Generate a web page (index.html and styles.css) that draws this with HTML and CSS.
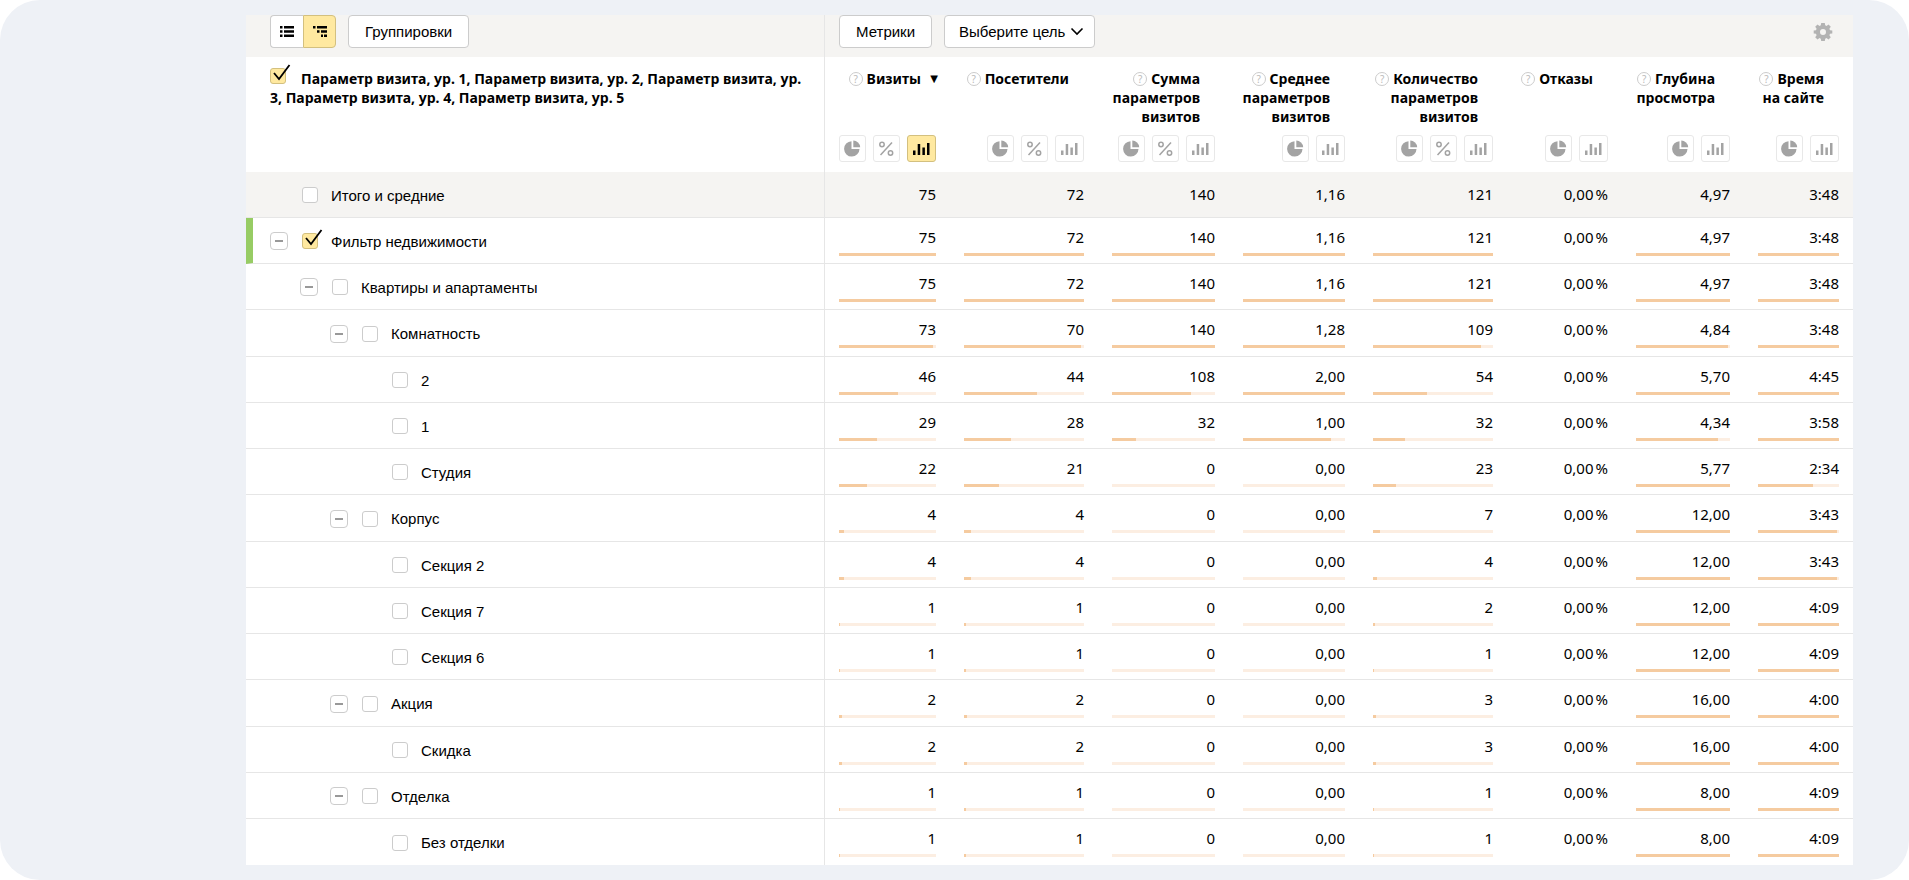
FILE: index.html
```
<!DOCTYPE html>
<html lang="ru">
<head>
  <meta charset="UTF-8">
  <meta name="viewport" content="width=device-width, initial-scale=1.0">
  <title>Параметры визитов</title>
  <link rel="stylesheet" href="styles.css">
</head>
<body>
  <!-- Icons -->
  <svg class="sprite" aria-hidden="true">
    <symbol id="pie" viewBox="0 0 17 17">
      <path d="M7.5 1.2V9h8A7.7 7.7 0 1 1 7.5 1.2z"/>
      <path d="M9.3.6a7.2 7.2 0 0 1 6.9 6.6H9.3z"/>
    </symbol>
    <symbol id="percent" viewBox="0 0 17 17">
      <g fill="none" stroke="currentColor" stroke-width="1.5">
        <circle cx="4" cy="4.5" r="2.2"/>
        <circle cx="12.5" cy="13" r="2.2"/>
        <path d="M14 2.5 2.5 15"/>
      </g>
    </symbol>
    <symbol id="bars" viewBox="0 0 17 17">
      <path d="M0 10.500h2.500V15H0zM4.700 4h2.500v11H4.700zM9.400 7.500h2.500V15H9.400zM14 3h2.500v12H14z"/>
    </symbol>
  </svg>

  <main class="page">
    <div class="report">
      <div class="toolbar">
        <div class="toolbar-left">
          <div class="switch">
            <button class="btn btn-icon" aria-label="Список">
              <svg width="14" height="11" viewBox="0 0 14 11"><path d="M0 0h2.5v2.5H0zM4 0h10v2.5H4zM0 4.2h2.5v2.5H0zM4 4.2h10v2.5H4zM0 8.4h2.5v2.5H0zM4 8.4h10v2.5H4z"/></svg>
            </button>
            <button class="btn btn-icon active" aria-label="Дерево">
              <svg width="14" height="11" viewBox="0 0 14 11"><path d="M0 0h2.5v2.5H0zM4 0h10v2.5H4zM4 4.2h2.5v2.5H4zM8 4.2h6v2.5H8zM8 8.4h2v2.5H8zM11 8.4h3v2.5h-3z"/></svg>
            </button>
          </div>
          <button class="btn">Группировки</button>
        </div>
        <div class="toolbar-right">
          <button class="btn">Метрики</button>
          <select class="btn goal" aria-label="Цель">
            <option>Выберите цель</option>
          </select>
          <button class="gear" aria-label="Настройки">
            <svg width="20" height="20" viewBox="0 0 20 20"><path fill-rule="evenodd" d="M8.2 1h3.6l.4 2.3 1.3.6 2-1.4 2.3 2.3-1.4 2 .6 1.4 2.3.4v2.8l-2.3.4-.6 1.4 1.4 2-2.3 2.3-2-1.4-1.3.6-.4 2.3H8.2l-.4-2.3-1.3-.6-2 1.4-2.3-2.3 1.4-2-.6-1.4-2.3-.4V8.600l2.300-.4.6-1.400-1.400-2 2.300-2.300 2 1.400 1.300-.6zM10 7a3 3 0 1 0 0 6 3 3 0 0 0 0-6z"/></svg>
          </button>
        </div>
      </div>

      <table>
        <colgroup>
          <col>
          <col class="col-visits">
          <col class="col-users">
          <col class="col-sum">
          <col class="col-avg">
          <col class="col-count">
          <col class="col-bounce">
          <col class="col-depth">
          <col class="col-time">
        </colgroup>
        <thead>
          <tr id="head">
            <th class="params">
              <label><input type="checkbox" class="check" checked>Параметр визита, ур. 1, Параметр визита, ур. 2, Параметр визита, ур. 3, Параметр визита, ур. 4, Параметр визита, ур. 5</label>
            </th>
          </tr>
        </thead>
        <tbody id="rows"></tbody>
      </table>
    </div>
  </main>

  <script>
    const columns = [
      { title: "Визиты", modes: ["pie", "percent", "bars"], sorted: true },
      { title: "Посетители", modes: ["pie", "percent", "bars"] },
      { title: "Сумма<br>параметров<br>визитов", modes: ["pie", "percent", "bars"] },
      { title: "Среднее<br>параметров<br>визитов", modes: ["pie", "bars"] },
      { title: "Количество<br>параметров<br>визитов", modes: ["pie", "percent", "bars"] },
      { title: "Отказы", modes: ["pie", "bars"], noBar: true },
      { title: "Глубина<br>просмотра", modes: ["pie", "bars"] },
      { title: "Время<br>на сайте", modes: ["pie", "bars"] }
    ];

    const modeNames = { pie: "Доля", percent: "Проценты", bars: "Сравнение" };

    // level, name, values; the first row holds the totals
    const rows = [
      [0, "Итого и средние", "75 72 140 1,16 121 0,00 4,97 3:48"],
      [0, "Фильтр недвижимости", "75 72 140 1,16 121 0,00 4,97 3:48"],
      [1, "Квартиры и апартаменты", "75 72 140 1,16 121 0,00 4,97 3:48"],
      [2, "Комнатность", "73 70 140 1,28 109 0,00 4,84 3:48"],
      [3, "2", "46 44 108 2,00 54 0,00 5,70 4:45"],
      [3, "1", "29 28 32 1,00 32 0,00 4,34 3:58"],
      [3, "Студия", "22 21 0 0,00 23 0,00 5,77 2:34"],
      [2, "Корпус", "4 4 0 0,00 7 0,00 12,00 3:43"],
      [3, "Секция 2", "4 4 0 0,00 4 0,00 12,00 3:43"],
      [3, "Секция 7", "1 1 0 0,00 2 0,00 12,00 4:09"],
      [3, "Секция 6", "1 1 0 0,00 1 0,00 12,00 4:09"],
      [2, "Акция", "2 2 0 0,00 3 0,00 16,00 4:00"],
      [3, "Скидка", "2 2 0 0,00 3 0,00 16,00 4:00"],
      [2, "Отделка", "1 1 0 0,00 1 0,00 8,00 4:09"],
      [3, "Без отделки", "1 1 0 0,00 1 0,00 8,00 4:09"]
    ];

    const totals = rows[0][2].split(" ").map(toNumber);

    function toNumber(text) {
      if (text.includes(":")) {
        const [min, sec] = text.split(":");
        return min * 60 + Number(sec);
      }
      return Number(text.replace(",", "."));
    }

    function headCell(col) {
      const buttons = col.modes.map(mode => {
        const active = col.sorted && mode === "bars" ? " active" : "";
        return `<button class="mode mode-${mode}${active}" aria-label="${modeNames[mode]}"><svg width="17" height="17"><use href="#${mode}"/></svg></button>`;
      }).join("");
      return `<th><div class="head">
        <div class="title"><span class="help">?</span>${col.title}${col.sorted ? '<span class="sort">▼</span>' : ""}</div>
        <div class="modes">${buttons}</div>
      </div></th>`;
    }

    function valueCell(text, i, isTotal) {
      if (columns[i].noBar) {
        return `<td><div class="value">${text}<span class="unit">%</span></div></td>`;
      }
      if (isTotal) {
        return `<td><div class="value">${text}</div></td>`;
      }
      const percent = Math.min(100, toNumber(text) / totals[i] * 100);
      return `<td><div class="value">${text}</div><div class="bar"><div class="fill" style="width: ${percent}%"></div></div></td>`;
    }

    function row([level, name, values], n) {
      const isTotal = n === 0;
      const toggle = level < 3 && !isTotal
        ? '<button class="toggle" aria-label="Свернуть"></button>'
        : '<span class="toggle-space"></span>';
      const cells = values.split(" ").map((v, i) => valueCell(v, i, isTotal)).join("");
      return `<tr class="${isTotal ? "total" : n === 1 ? "selected" : ""}">
        <td class="name"><div class="node level-${level}">${toggle}<input type="checkbox" class="check" id="row${n}"${n === 1 ? " checked" : ""}><label for="row${n}">${name}</label></div></td>${cells}
      </tr>`;
    }

    document.getElementById("head").insertAdjacentHTML("beforeend", columns.map(headCell).join(""));
    document.getElementById("rows").innerHTML = rows.map(row).join("");
  </script>
</body>
</html>
```
FILE: styles.css
```
* {
  box-sizing: border-box;
}
body {
  margin: 0;
  background-color: #fff;
  color: #000;
  font-family: "Liberation Sans", Arial, sans-serif;
  font-size: 15px;
}
button, select {
  font: inherit;
  color: inherit;
  cursor: pointer;
}
.sprite {
  position: absolute;
  width: 0;
  height: 0;
}
.page {
  min-height: 100vh;
  padding: 15px 56px 15px 246px;
  background-color: #eef1f6;
  border-radius: 40px;
}
.report {
  background-color: #fff;
}

/* Toolbar */
.toolbar {
  display: flex;
  height: 42px;
  background-color: #f5f4f2;
}
.toolbar-left {
  flex: 1;
  display: flex;
  align-items: flex-start;
  gap: 12px;
  padding-left: 24px;
  border-right: 1px solid #e6e6e6;
}
.toolbar-right {
  width: 1028px;
  display: flex;
  align-items: flex-start;
  gap: 12px;
  padding: 0 20px 0 14px;
}
.btn {
  height: 33px;
  padding: 0 16px 1px;
  border: 1px solid #ccc;
  border-radius: 4px;
  background-color: #fff;
}
.switch {
  display: flex;
}
.btn-icon {
  width: 33px;
  padding: 0;
}
.btn-icon svg {
  display: block;
  margin: 0 auto;
}
.btn-icon:first-child {
  border-right: none;
  border-radius: 4px 0 0 4px;
}
.btn-icon:last-child {
  border-radius: 0 4px 4px 0;
}
.btn.active, .mode.active {
  background-color: #ffe9a0;
  border-color: #d3c07f;
  color: #000;
}
.goal {
  width: 151px;
  padding: 0 14px 1px;
  appearance: none;
  background: #fff url("data:image/svg+xml,%3Csvg xmlns='http://www.w3.org/2000/svg' width='14' height='9'%3E%3Cpath d='M1.500 1.500 7 7l5.500-5.500' fill='none' stroke='black' stroke-width='1.600'/%3E%3C/svg%3E") no-repeat right 10px center;
}
.gear {
  margin: 7px 0 0 auto;
  padding: 0;
  border: none;
  background: none;
}
.gear svg {
  display: block;
  fill: #b3b3b3;
}

/* Table */
table {
  width: 100%;
  table-layout: fixed;
  border-collapse: separate;
  border-spacing: 0;
}
.col-visits { width: 125px; }
.col-users { width: 148px; }
.col-sum { width: 131px; }
.col-avg { width: 130px; }
.col-count { width: 148px; }
.col-bounce { width: 115px; }
.col-depth { width: 122px; }
.col-time { width: 109px; }

th {
  padding: 0;
  vertical-align: top;
  text-align: right;
  font-family: "Noto Sans", sans-serif;
  font-size: 14px;
  font-weight: 700;
  line-height: 19px;
}
.params {
  padding: 11px 14px 0 24px;
  text-align: left;
  border-right: 1px solid #e6e6e6;
}
.params .check {
  margin: 0 15px 0 0;
  vertical-align: 0;
}
.head {
  min-height: 115px;
  display: flex;
  flex-direction: column;
  justify-content: space-between;
  padding: 12px 14px 10px 0;
}
.title {
  position: relative;
  padding-right: 15px;
}
.help {
  display: inline-block;
  width: 14px;
  height: 14px;
  margin-right: 4px;
  border: 1px solid #ccc;
  border-radius: 50%;
  color: #bbb;
  font-size: 10px;
  font-weight: 400;
  line-height: 12px;
  text-align: center;
  vertical-align: 1px;
}
.sort {
  position: absolute;
  right: -2px;
  font-family: "DejaVu Sans", sans-serif;
  font-size: 10px;
}
.modes {
  display: flex;
  justify-content: flex-end;
  gap: 7px;
}
.mode {
  width: 27px;
  height: 27px;
  padding: 0;
  border: 1px solid #e8e8e8;
  border-radius: 3px;
  background-color: #fff;
  color: #a3a3a3;
}
.mode-bars {
  width: 29px;
}
.mode svg {
  display: block;
  margin: 0 auto;
  fill: currentColor;
}

td {
  height: 46px;
  padding: 0 14px;
  vertical-align: top;
  border-bottom: 1px solid #e6e6e6;
}
tr:nth-child(4n) td {
  height: 47px;
}
tr:last-child td {
  border-bottom: none;
}
.name {
  padding: 1px 14px 0 24px;
  vertical-align: middle;
  border-right: 1px solid #e6e6e6;
}
.total td {
  background-color: #f5f4f2;
}
.total .value {
  padding-top: 12px;
}
.selected .name {
  border-left: 7px solid #97cc64;
  padding-left: 17px;
}
.node {
  display: flex;
  align-items: center;
}
.level-1 { padding-left: 30px; }
.level-2 { padding-left: 60px; }
.level-3 { padding-left: 90px; }

.toggle, .toggle-space {
  width: 18px;
  height: 18px;
  margin-right: 14px;
}
.toggle {
  display: flex;
  align-items: center;
  justify-content: center;
  padding: 0;
  border: 1px solid #ccc;
  border-radius: 4px;
  background-color: #fff;
}
.toggle::before {
  content: "";
  width: 8px;
  height: 2px;
  background-color: #999;
}
.check {
  appearance: none;
  position: relative;
  width: 16px;
  height: 16px;
  margin: 0 13px 0 0;
  border: 1px solid #ccc;
  border-radius: 3px;
  background-color: #fff;
}
.check:checked {
  border-color: #d3c07f;
  background-color: #ffe9a0;
}
.check:checked::after {
  content: "";
  position: absolute;
  left: 1px;
  top: -5px;
  width: 19px;
  height: 18px;
  background: url("data:image/svg+xml,%3Csvg xmlns='http://www.w3.org/2000/svg' width='19' height='18'%3E%3Cpath d='M2 9l5 6L17.500 1' fill='none' stroke='black' stroke-width='1.800'/%3E%3C/svg%3E") no-repeat;
}
.value {
  padding-top: 9px;
  font-family: "Noto Sans", sans-serif;
  font-size: 15px;
  line-height: 20px;
  text-align: right;
}
.unit {
  margin-left: 2px;
}
.bar {
  height: 3px;
  margin-top: 6px;
  background-color: #fceee2;
}
.fill {
  height: 3px;
  background-color: #f5cba0;
}
```
